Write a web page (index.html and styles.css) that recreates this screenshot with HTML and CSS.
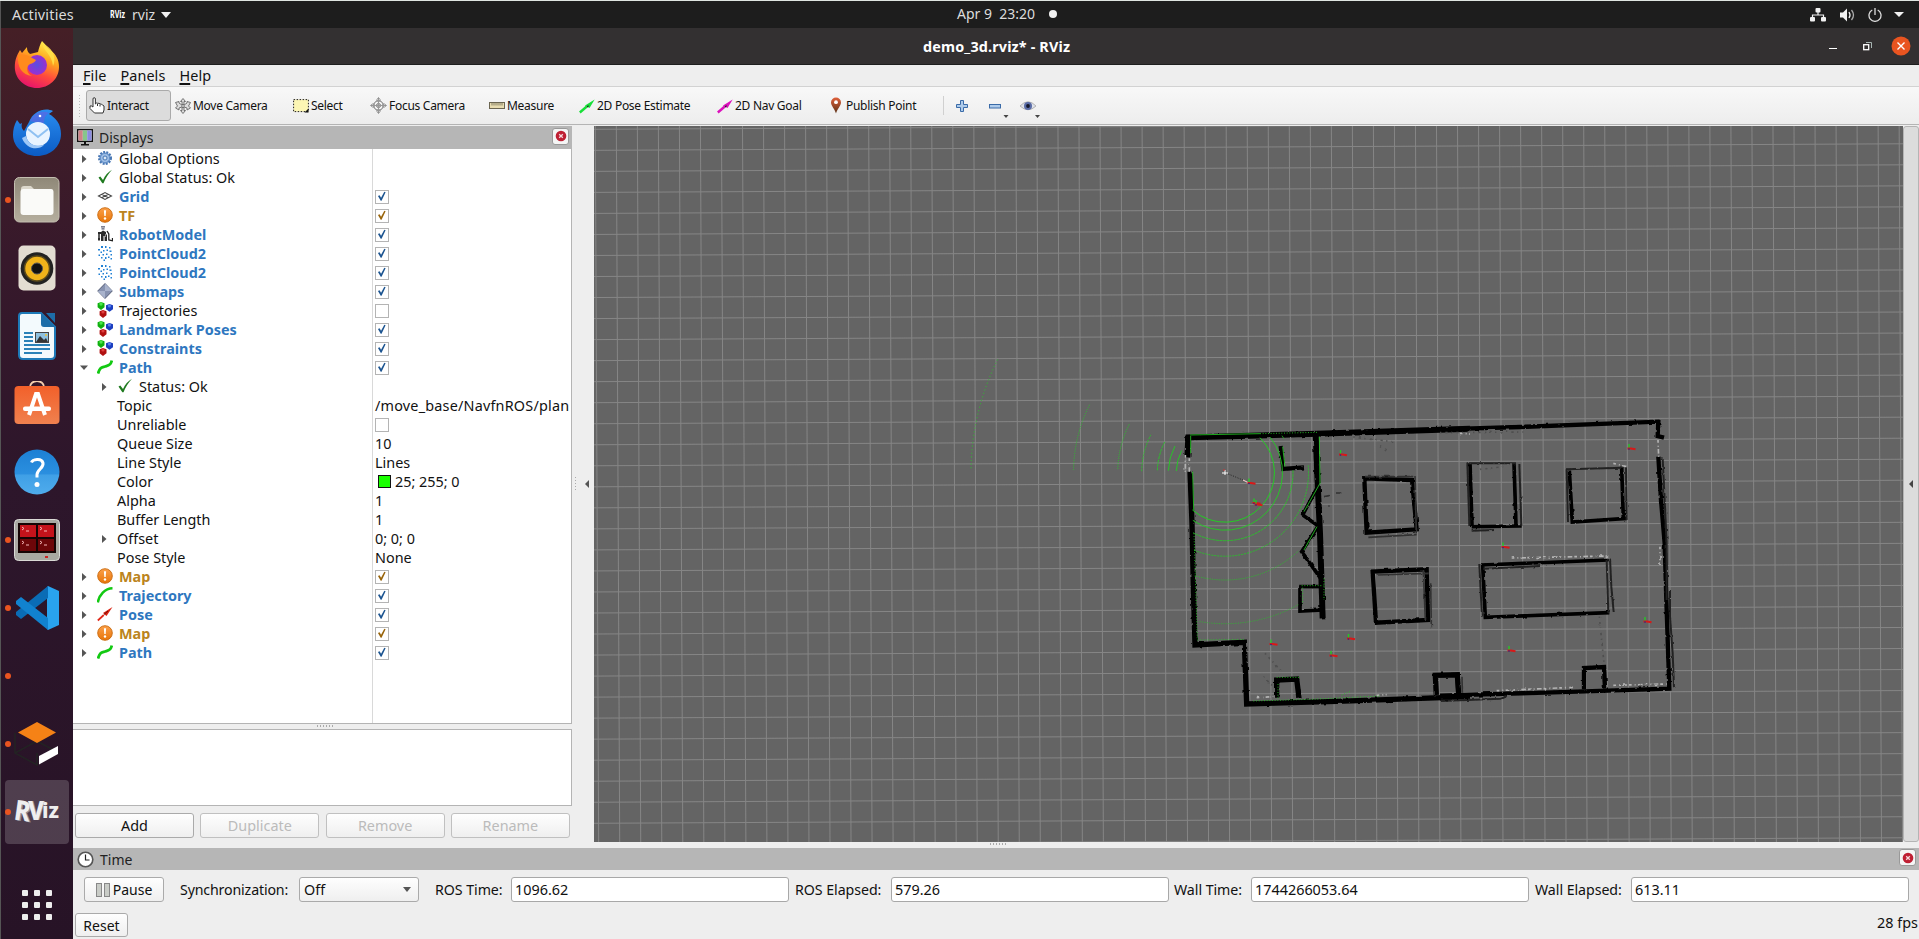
FILE: index.html
```html
<!DOCTYPE html>
<html lang="en">
<head>
<meta charset="utf-8">
<title>demo_3d.rviz* - RViz</title>
<link rel="stylesheet" href="styles.css">
</head>
<body>
<svg class="defs" aria-hidden="true">
  <defs>
    <linearGradient id="ffA" x1=".7" y1="0" x2=".3" y2="1"><stop offset="0" stop-color="#fff44f"/><stop offset=".35" stop-color="#ffa51f"/><stop offset=".65" stop-color="#ff4a3d"/><stop offset="1" stop-color="#e4106f"/></linearGradient>
    <radialGradient id="ffB"><stop offset="0" stop-color="#5b4de0"/><stop offset="1" stop-color="#9a2fd0"/></radialGradient>
    <linearGradient id="tbA" x1="0" y1="0" x2="0" y2="1"><stop offset="0" stop-color="#2a8df0"/><stop offset="1" stop-color="#0b5bc4"/></linearGradient>
    <linearGradient id="flA" x1="0" y1="0" x2="0" y2="1"><stop offset="0" stop-color="#8f8878"/><stop offset="1" stop-color="#b5ae9e"/></linearGradient>
    <linearGradient id="swA" x1="0" y1="0" x2="0" y2="1"><stop offset="0" stop-color="#f2602a"/><stop offset="1" stop-color="#f0814f"/></linearGradient>
    <linearGradient id="hpA" x1="0" y1="0" x2="0" y2="1"><stop offset="0" stop-color="#1d80d4"/><stop offset=".55" stop-color="#2b8fdf"/><stop offset=".56" stop-color="#3f9fe6"/><stop offset="1" stop-color="#4facec"/></linearGradient>
    <linearGradient id="orA" x1="0" y1="0" x2="0" y2="1"><stop offset="0" stop-color="#fba04a"/><stop offset="1" stop-color="#e87508"/></linearGradient>
    <linearGradient id="pinA" x1="0" y1="0" x2="0" y2="1"><stop offset="0" stop-color="#e0603a"/><stop offset="1" stop-color="#5a3218"/></linearGradient>
    <symbol id="arr" viewBox="0 0 8 10"><path d="M2 1l4.500 4L2 9z" fill="#555"/></symbol>
    <symbol id="down" viewBox="0 0 8 10"><path d="M0 2.500h8L4 7z" fill="#555"/></symbol>
    <symbol id="gear" viewBox="0 0 16 16"><circle cx="8" cy="8" r="5.800" fill="#8fb2dd" stroke="#4877b4" stroke-width="2.400" stroke-dasharray="1.900 1.200"/><circle cx="8" cy="8" r="4.600" fill="#9dbde4" stroke="#5d8ac4" stroke-width=".8"/><circle cx="8" cy="8" r="2" fill="#dbe8f6" stroke="#4877b4"/></symbol>
    <symbol id="ok" viewBox="0 0 16 16"><path d="M1.500 8.500l1.800-1L6 11C8 6.500 11 3 15 .8 11.500 4.500 8.500 9 6.500 14.200H5.300z" fill="#1f7a1f"/></symbol>
    <symbol id="grid" viewBox="0 0 16 16"><path d="M1.500 8L8 4.500 14.500 8 8 11.500zM4.700 6.200l6.600 3.600M11.300 6.200L4.700 9.800" fill="none" stroke="#444" stroke-width="1.100"/></symbol>
    <symbol id="warn" viewBox="0 0 16 16"><circle cx="8" cy="8" r="7.300" fill="url(#orA)" stroke="#c8690c" stroke-width=".9"/><path d="M6.900 3.200h2.200L8.700 9H7.300z" fill="#fff"/><circle cx="8" cy="11.500" r="1.200" fill="#fff"/></symbol>
    <symbol id="robot" viewBox="0 0 16 16"><path d="M4 .8h4M4.500 2.800h3" stroke="#555a70" stroke-width="1.300"/><path d="M1 6h3l2-1.500L9 6v2l1 1v6H7.600v-5H6.500v5H4V8H3v6.500H1z" fill="#2b2b2b"/><path d="M10 5l1.800 3v6l3.700.8V12" fill="none" stroke="#222" stroke-width="1.300"/><path d="M2 8v4M8.500 8v3" stroke="#bbb" stroke-width=".7"/></symbol>
    <symbol id="cloud" viewBox="0 0 16 16"><path d="M4 1h2v2H4zM8 1h1.500v2H8zM12 2h1.500v1.500H12zM1 4h2v1.500H1zM6 5h1.500v1.500H6zM9.500 4.500H11V6H9.500zM3.500 6.500H5V8H3.500zM12.500 5.500h2V7h-2zM1.500 9.500H3V11H1.500zM5.500 9H7v1.500H5.500zM9 8.500h1.500V10H9zM13.500 9H15v1.500h-1.500zM4 12h1.500v1.500H4zM8 12h1.500v2H8zM11 11.500h1.500V13H11zM6.500 14.500H8V16H6.500zM13.500 13H15v1.500h-1.500z" fill="#2080d4"/></symbol>
    <symbol id="dia" viewBox="0 0 16 16"><path d="M8 .5L15.300 8 8 15.500.7 8z" fill="#8792b0" stroke="#3d4660" stroke-width=".8"/><path d="M8 .5L15.300 8H8zM.7 8H8v7.500z" fill="#a9b3cc"/></symbol>
    <symbol id="marks" viewBox="0 0 16 16"><path d="M4 0l3.500 1.200v4L4 8 .6 5.200v-4z" fill="#10b010"/><circle cx="4" cy="2" r="1.700" fill="#4be84b"/><path d="M12.500 2L16 3.200v4l-3.500 2.600L9 7.200v-4z" fill="#1c3fc0"/><circle cx="12.400" cy="4" r="1.600" fill="#5a82f0"/><path d="M6 8l3.500 1.200v4L6 16l-3.400-2.800v-4z" fill="#b01010"/><circle cx="6" cy="10" r="1.600" fill="#e04040"/></symbol>
    <symbol id="path" viewBox="0 0 16 16"><path d="M1 14.500C3 8 5 8.500 8 7.500s6-1 6.800-6" fill="none" stroke="#12c912" stroke-width="2.800"/></symbol>
    <symbol id="traj" viewBox="0 0 16 16"><path d="M.8 15.500C2 8 8 1.500 15.500 1.300" fill="none" stroke="#12c912" stroke-width="2.500"/></symbol>
    <symbol id="pose" viewBox="0 0 16 16"><path d="M.8 14.500l6-5.500" stroke="#e02818" stroke-width="1.700"/><path d="M15.500 1L9.500 10 6 7z" fill="#d82010"/><path d="M7 8.500l4-3.500" stroke="#701008"/></symbol>
    <symbol id="arrow2d" viewBox="0 0 16 16"><path d="M.8 14.500l7-6" stroke="currentColor" stroke-width="2.400"/><path d="M15.700 1.500L10.500 10 6 7.500z" fill="currentColor"/><path d="M8 9.200l1.500-1.500" stroke="#222" stroke-width="1.200"/></symbol>
    <symbol id="tick" viewBox="0 0 14 14"><path d="M2.300 5.800l1.900-.7 1.700 2.900L9.700 1l1.500.4L6.500 11.400H5.500z" fill="currentColor"/></symbol>
    <symbol id="close" viewBox="0 0 12 12"><circle cx="6" cy="6" r="5.300" fill="#bf1f33"/><path d="M4.200 4.200l3.600 3.600M7.800 4.200L4.200 7.800" stroke="#f6d8dc" stroke-width="1.300"/></symbol>
  </defs>
</svg>

<div class="edge"></div>
<header class="topbar">
  <span class="activities">Activities</span>
  <span class="appmenu">
    <svg width="17" height="16" viewBox="0 0 17 16"><text x="0" y="11" class="tinylogo" textLength="15" lengthAdjust="spacingAndGlyphs">RViz</text></svg>
    <span class="appname">rviz</span>
    <svg class="caret" width="10" height="6"><path d="M0 0h10L5 6z" fill="#f2f2f2"/></svg>
  </span>
  <span class="clock"><span class="clocktext">Apr 9&nbsp; 23:20</span><i></i></span>
  <span class="tray">
    <svg width="16" height="14" viewBox="0 0 16 14" fill="#f2f2f2"><rect x="5.500" y="0" width="5" height="4.500" rx="1"/><rect x="0" y="9" width="5" height="4.500" rx="1"/><rect x="11" y="9" width="5" height="4.500" rx="1"/><path d="M8 4v3M2.500 10V7h11v3" fill="none" stroke="#f2f2f2" stroke-width="1.200"/></svg>
    <svg width="16" height="14" viewBox="0 0 16 14"><path d="M0 4.500h3L7 .5v13l-4-4H0z" fill="#f2f2f2"/><path d="M9 4q2 3 0 6" fill="none" stroke="#f2f2f2" stroke-width="1.300"/><path d="M11.500 2q4 5 0 10" fill="none" stroke="#aaa" stroke-width="1.300"/></svg>
    <svg width="14" height="14" viewBox="0 0 14 14" fill="none" stroke="#ddd" stroke-width="1.300"><path d="M4.300 2a6 6 0 1 0 5.400 0M7 0v7"/></svg>
    <svg width="10" height="5"><path d="M0 0h10L5 5z" fill="#f2f2f2"/></svg>
  </span>
</header>

<div class="desk">
  <nav class="dock">
    <div class="slot"><svg width="46" height="48" viewBox="0 0 46 48"><path d="M28 1c4 4 5 7 8 9 6 4 9 10 9 17 0 12-10 21-22 21S.800 39 .800 27C.800 20 3 15 6 10l2 3 5-6c0 4 1 5 3 7l8-2c1-4 2-8 4-11z" fill="url(#ffA)"/><circle cx="23" cy="25" r="10" fill="url(#ffB)"/><path d="M4 15c8-2 12 2 18 5-2 4-6 3-8 6-2 4 0 8 4 10C8 35 3 27 4 15z" fill="#ff8a1c"/><path d="M28 2c0 8 10 12 11 24 4-8-1-17-6-20z" fill="#ffe24a" opacity=".85"/></svg></div>
    <div class="slot"><svg width="48" height="48" viewBox="0 0 48 48"><path d="M16 14C20 3 32-1 40 3c-1 1-3 2-4 3 7 4 12 10 12 20 0 13-11 22-24 22S0 39 0 27c0-5 1-10 4-15l3 4 2-1c-1 4 0 6 2 8z" fill="url(#tbA)"/><path d="M17 13C21 5 29 2 36 5c-6 3-4 9-6 11z" fill="#6b5ce0" opacity=".55"/><circle cx="25" cy="26" r="12" fill="#e9f4ff"/><path d="M15 21l10 8 10-8" fill="none" stroke="#8fc1f2" stroke-width="2"/><path d="M13 28c2 8 8 11 18 9-6 6-18 4-22-7z" fill="#9ec8f7"/><circle cx="27" cy="8" r="1.300" fill="#fff"/></svg></div>
    <div class="slot run"><svg width="46" height="46" viewBox="0 0 46 46"><rect x=".5" y=".5" width="44.500" height="44.500" rx="5" fill="url(#flA)" stroke="#c4bfb1"/><path d="M7 12q0-3 3-3h7l3 3h17q2 0 2 2v20H7z" fill="#dcd8cc"/><rect x="6.500" y="12" width="33" height="26" rx="3" fill="#fafaf8"/></svg></div>
    <div class="slot"><svg width="38" height="46" viewBox="0 0 38 46"><rect x=".5" y=".5" width="37" height="45" rx="5" fill="#e3ddd2"/><circle cx="19" cy="23.500" r="16.300" fill="#222"/><circle cx="19" cy="23.500" r="12.500" fill="#f0b31a" stroke="#5b4a1b" stroke-width="1.500"/><circle cx="19" cy="23.500" r="5.500" fill="#111" stroke="#555"/></svg></div>
    <div class="slot"><svg width="38" height="48" viewBox="0 0 38 48"><path d="M4 1h19l14 14v28q0 4-4 4H5q-4 0-4-4V4q0-3 3-3z" fill="#f3fafd" stroke="#1d7ab8" stroke-width="2"/><path d="M28 1h9v10zM23 1v11q0 3 3 3h11z" fill="#1d6da8"/><path d="M6 21h9M6 25h9M6 29h9M6 33h26M6 37h26M6 41h18" stroke="#2b82b8" stroke-width="1.800"/><rect x="17.500" y="20.500" width="13" height="10" fill="#8ec0de" stroke="#444"/><path d="M18 30l4-6 4 4 2-2 2 4z" fill="#333"/><circle cx="28" cy="23" r="1" fill="#f6c22a"/></svg></div>
    <div class="slot"><svg width="46" height="46" viewBox="0 0 46 46"><path d="M16 8V6a7 6 0 0 1 14 0v2" fill="none" stroke="#f4cfae" stroke-width="1.800"/><rect x=".5" y="5" width="45" height="38" rx="4" fill="url(#swA)"/><path d="M15 34L22 13h2l7 21" fill="none" stroke="#fff" stroke-width="4"/><rect x="9" y="25.500" width="28" height="4.500" rx="2" fill="#fff"/></svg></div>
    <div class="slot"><svg width="46" height="46" viewBox="0 0 46 46"><circle cx="23" cy="23" r="22.500" fill="url(#hpA)"/><path d="M17.500 13.500c1-3 10-5 11.500.5 1 5-6 6.500-6 11.500v3" fill="none" stroke="#fff" stroke-width="3"/><circle cx="23" cy="35.500" r="2.500" fill="#fff"/></svg></div>
    <div class="slot run"><svg width="46" height="42" viewBox="0 0 46 42"><rect x=".5" y=".5" width="45" height="41" rx="4" fill="#a9a9a2" stroke="#dadad6"/><rect x="4" y="4" width="38" height="30" fill="#160404"/><path d="M6 6h16v12H6zM24 6h16v12H24z" fill="#c4131b"/><path d="M6 20h16v12H6zM24 20h16v12H24z" fill="#6d0609"/><path d="M8 8l2 1.500L8 11M12 12h3M26 8l2 1.500-2 1.500M30 12h3M8 22l2 1.500L8 25M12 26h3M26 22l2 1.500-2 1.500M30 26h3" fill="none" stroke="#f6b8b8"/><path d="M31 38h3" stroke="#c22" stroke-width="2"/></svg></div>
    <div class="slot run"><svg width="44" height="44" viewBox="0 0 44 44"><path d="M33 0l11 5v34l-11 5-1-1V1z" fill="#29a3ee"/><path d="M33 0v12L6 33 1 29v-3z" fill="#0a6cb5"/><path d="M1 15l5-4 27 21v12L1 18z" fill="#1182cf"/></svg></div>
    <div class="slot run"></div>
    <div class="slot run"><svg width="46" height="46" viewBox="0 0 46 46"><path d="M1 12v20l22 12V32M1 32l22-12 22 12" fill="none" stroke="#232323" stroke-width="1.500"/><path d="M4 11.500L23 1l19 10.500L23 22z" fill="#f58216"/><path d="M25 35l19-10v8L25 43.500z" fill="#fff"/></svg></div>
    <div class="slot run active"><svg width="50" height="56" viewBox="0 0 50 56" class="rvizlogo"><text x="4" y="37.500" font-size="28" fill="#8f8b93" transform="rotate(8 12 28)" textLength="16" lengthAdjust="spacingAndGlyphs">R</text><text x="2.500" y="37" font-size="28" transform="rotate(8 12 28)" textLength="16" lengthAdjust="spacingAndGlyphs">R</text><text x="17" y="36" font-size="26" textLength="16" fill="#8f8b93" lengthAdjust="spacingAndGlyphs">V</text><text x="16" y="35.500" font-size="26" textLength="16" lengthAdjust="spacingAndGlyphs">V</text><text x="30" y="34" font-size="22" textLength="17" lengthAdjust="spacingAndGlyphs">iz</text></svg></div>
    <div class="apps"><i></i><i></i><i></i><i></i><i></i><i></i><i></i><i></i><i></i></div>
  </nav>

  <main class="window">
    <div class="titlebar">
      <span class="title">demo_3d.rviz* - RViz</span>
      <span class="winbtns">
        <svg width="8" height="8"><path d="M0 6.500h8" stroke="#fff"/></svg>
        <svg width="9" height="9"><path d="M3 .5h5.500V6" fill="none" stroke="#a8b5b3"/><rect x=".7" y="2.700" width="5" height="5" fill="none" stroke="#fff" stroke-width="1.300"/></svg>
        <svg width="20" height="20"><circle cx="10" cy="10" r="9.500" fill="#e95420"/><path d="M6.500 6.500l7 7M13.500 6.500l-7 7" stroke="#fff" stroke-width="1.400"/></svg>
      </span>
    </div>
    <div class="menubar"><span><u>F</u>ile</span><span class="m2"><u>P</u>anels</span><span class="m3"><u>H</u>elp</span></div>
    <div class="toolbar">
      <span class="handle"></span>
      <span class="tool t1 on"><svg width="16" height="17" viewBox="0 0 16 17"><path d="M4 10V2q0-1.300 1.200-1.300T6.400 2v5l1.100-1 1.200.3 1.300 0 1 .6 1.300.3 1 .6L15 9v4l-1 3H5.500L1 11.500V9q1-.8 3 1z" fill="#fff" stroke="#333"/><path d="M8.500 7v2M11 7.500v2" stroke="#333"/></svg>Interact</span>
      <span class="tool t2"><svg width="16" height="16" viewBox="0 0 16 16"><path d="M8 .5l2.500 3H9v3h-2v-3H5.500zM8 15.500l2.500-3H9v-3h-2v3H5.500zM.5 4.500L4 3.500v1.500l3 2v2l-3 1v2L.5 10l2-2zM15.500 4.500L12 3.500v1.500L9 7v2l3 1v2l3.500-2-2-2z" fill="#ddd" stroke="#666" stroke-width=".9"/></svg>Move Camera</span>
      <span class="tool t3"><svg width="16" height="14"><rect x=".6" y=".6" width="14.800" height="12" fill="#fcf6b4" stroke="#222" stroke-dasharray="1.500 1.500"/><path d="M15.500 9.500v4h-4z" fill="#111"/></svg>Select</span>
      <span class="tool t4"><svg width="17" height="17" viewBox="0 0 17 17" fill="none" stroke="#777"><circle cx="8.500" cy="8.500" r="4.800"/><circle cx="8.500" cy="8.500" r="2"/><path d="M8.500 1v15M1 8.500h15" stroke="#999"/><path d="M7 5V2.500L8.500.5 10 2.500V5M7 12v2.500l1.500 2 1.500-2V12M5 7H2.500L.5 8.500l2 1.500H5M12 7h2.500l2 1.500-2 1.500H12" stroke="#888" stroke-width=".9"/></svg>Focus Camera</span>
      <span class="tool t5"><svg width="16" height="8"><rect x=".5" y=".5" width="15" height="6" fill="#e8dcb0" stroke="#6b6550"/><path d="M3 1v2.500M5 1v2.500M7 1v2.500M9 1v2.500M11 1v2.500M13 1v2.500" stroke="#6b6550" stroke-width=".8"/></svg>Measure</span>
      <span class="tool t6"><svg class="green" width="16" height="16"><use href="#arrow2d"/></svg>2D Pose Estimate</span>
      <span class="tool t7"><svg class="pink" width="16" height="16"><use href="#arrow2d"/></svg>2D Nav Goal</span>
      <span class="tool t8"><svg width="16" height="17" viewBox="0 0 16 17"><path d="M8 .5a5 5 0 0 1 5 5C13 9 9 12 8 16.500 7 12 3 9 3 5.500a5 5 0 0 1 5-5z" fill="url(#pinA)"/><circle cx="8" cy="5.200" r="1.900" fill="#fff"/></svg>Publish Point</span>
      <span class="sep"></span>
      <svg class="tadd" width="12" height="12"><path d="M4.500.5h3v4h4v3h-4v4h-3v-4h-4v-3h4z" fill="#aecbeb" stroke="#3a6ba8"/></svg>
      <svg class="tsub" width="20" height="24"><rect x=".5" y="10.500" width="11" height="3.500" fill="#aecbeb" stroke="#3a6ba8"/><path d="M14.500 21h5l-2.500 3z" fill="#444"/></svg>
      <svg class="teye" width="20" height="24"><path d="M0 12Q8 3.500 16 12 8 19.500 0 12z" fill="#dfe2ea" stroke="#b4b4b4"/><circle cx="8" cy="12" r="4" fill="#5a6ca6"/><circle cx="8" cy="12" r="1.900" fill="#15182a"/><path d="M15 21h5l-2.500 3z" fill="#444"/></svg>
    </div>

    <div class="work">
      <section class="displays">
        <div class="dockhead"><svg width="16" height="17" viewBox="0 0 16 17"><rect x=".7" y=".7" width="14.600" height="11.600" fill="#fff" stroke="#111" stroke-width="1.400"/><path d="M1.500 1.500h4.300v10H1.500z" fill="#cf8288"/><path d="M5.800 1.500h4.400v10H5.800z" fill="#86c78b"/><path d="M10.200 1.500h4.300v10h-4.300z" fill="#8b8be0"/><path d="M7 12h2v3h3v1.500H4V15h3z" fill="#111"/></svg><span>Displays</span><button class="x"><svg width="12" height="12"><use href="#close"/></svg></button></div>
        <div class="tree">
          <div class="row"><svg class="a"><use href="#arr"/></svg><svg class="i"><use href="#gear"/></svg><span class="n">Global Options</span></div>
          <div class="row"><svg class="a"><use href="#arr"/></svg><svg class="i"><use href="#ok"/></svg><span class="n">Global Status: Ok</span></div>
          <div class="row"><svg class="a"><use href="#arr"/></svg><svg class="i"><use href="#grid"/></svg><span class="n b">Grid</span><svg class="c"><use href="#tick"/></svg></div>
          <div class="row"><svg class="a"><use href="#arr"/></svg><svg class="i"><use href="#warn"/></svg><span class="n w">TF</span><svg class="c cw"><use href="#tick"/></svg></div>
          <div class="row"><svg class="a"><use href="#arr"/></svg><svg class="i"><use href="#robot"/></svg><span class="n b">RobotModel</span><svg class="c"><use href="#tick"/></svg></div>
          <div class="row"><svg class="a"><use href="#arr"/></svg><svg class="i"><use href="#cloud"/></svg><span class="n b">PointCloud2</span><svg class="c"><use href="#tick"/></svg></div>
          <div class="row"><svg class="a"><use href="#arr"/></svg><svg class="i"><use href="#cloud"/></svg><span class="n b">PointCloud2</span><svg class="c"><use href="#tick"/></svg></div>
          <div class="row"><svg class="a"><use href="#arr"/></svg><svg class="i"><use href="#dia"/></svg><span class="n b">Submaps</span><svg class="c"><use href="#tick"/></svg></div>
          <div class="row"><svg class="a"><use href="#arr"/></svg><svg class="i"><use href="#marks"/></svg><span class="n">Trajectories</span><svg class="c"></svg></div>
          <div class="row"><svg class="a"><use href="#arr"/></svg><svg class="i"><use href="#marks"/></svg><span class="n b">Landmark Poses</span><svg class="c"><use href="#tick"/></svg></div>
          <div class="row"><svg class="a"><use href="#arr"/></svg><svg class="i"><use href="#marks"/></svg><span class="n b">Constraints</span><svg class="c"><use href="#tick"/></svg></div>
          <div class="row"><svg class="a"><use href="#down"/></svg><svg class="i"><use href="#path"/></svg><span class="n b">Path</span><svg class="c"><use href="#tick"/></svg></div>
          <div class="row sub"><svg class="a"><use href="#arr"/></svg><svg class="i"><use href="#ok"/></svg><span class="n">Status: Ok</span></div>
          <div class="row prop"><span class="n">Topic</span><span class="v long">/move_base/NavfnROS/plan</span></div>
          <div class="row prop"><span class="n">Unreliable</span><svg class="c"></svg></div>
          <div class="row prop"><span class="n">Queue Size</span><span class="v">10</span></div>
          <div class="row prop"><span class="n">Line Style</span><span class="v">Lines</span></div>
          <div class="row prop"><span class="n">Color</span><i class="sw"></i><span class="v">25; 255; 0</span></div>
          <div class="row prop"><span class="n">Alpha</span><span class="v">1</span></div>
          <div class="row prop"><span class="n">Buffer Length</span><span class="v">1</span></div>
          <div class="row prop"><svg class="a"><use href="#arr"/></svg><span class="n">Offset</span><span class="v">0; 0; 0</span></div>
          <div class="row prop"><span class="n">Pose Style</span><span class="v">None</span></div>
          <div class="row"><svg class="a"><use href="#arr"/></svg><svg class="i"><use href="#warn"/></svg><span class="n w">Map</span><svg class="c cw"><use href="#tick"/></svg></div>
          <div class="row"><svg class="a"><use href="#arr"/></svg><svg class="i"><use href="#traj"/></svg><span class="n b">Trajectory</span><svg class="c"><use href="#tick"/></svg></div>
          <div class="row"><svg class="a"><use href="#arr"/></svg><svg class="i"><use href="#pose"/></svg><span class="n b">Pose</span><svg class="c"><use href="#tick"/></svg></div>
          <div class="row"><svg class="a"><use href="#arr"/></svg><svg class="i"><use href="#warn"/></svg><span class="n w">Map</span><svg class="c cw"><use href="#tick"/></svg></div>
          <div class="row"><svg class="a"><use href="#arr"/></svg><svg class="i"><use href="#path"/></svg><span class="n b">Path</span><svg class="c"><use href="#tick"/></svg></div>
        </div>
        <div class="hsplit"></div>
        <div class="desc"></div>
        <div class="btnrow"><button>Add</button><button disabled>Duplicate</button><button disabled>Remove</button><button disabled>Rename</button></div>
      </section>
      <div class="vsplit"><i class="vdots"></i><svg width="4" height="8"><path d="M4 0v8L0 4z" fill="#555"/></svg></div>
      <svg class="view" width="1309" height="716" viewBox="594 126 1309 716">
        <defs>
          <filter id="rough" x="-5%" y="-5%" width="110%" height="110%"><feTurbulence type="fractalNoise" baseFrequency=".18" numOctaves="2" seed="4" result="n"/><feDisplacementMap in="SourceGraphic" in2="n" scale="2.600" xChannelSelector="R" yChannelSelector="G"/><feGaussianBlur stdDeviation=".6"/></filter>
          <g id="axes"><path d="M0 0V-4.500" stroke="#1fd01f" stroke-width="1.300"/><path d="M-1.500 0H2l4.500 .8" fill="none" stroke="#d81818" stroke-width="2"/><circle r=".8" cy=".6" fill="#203090"/></g>
        </defs>
        <g id="gridlines"></g>
        <g class="walls" filter="url(#rough)">
          <g transform="translate(1150 400) scale(.33333)">
            <path class="w16" d="M112 172L115 112 300 107 500 101 730 94 960 86"/>
            <path class="w14" d="M120 215L126 370 130 560 135 735 283 727 290 912 560 904 960 890"/>
            <path class="w16" d="M497 100L503 250 510 400 518 655"/>
            <path class="w12" d="M392 138L400 207 462 202"/>
            <path class="w10" d="M504 258L458 345 505 378M503 380L455 455 512 535M520 560H450V633L520 630"/>
            <path class="w14" d="M380 893V840L440 837 447 893M859 885L856 826 922 824 926 882"/>
            <path class="w12" d="M643 235L650 398 800 388 786 240Z"/>
            <path class="w4" d="M655 412L800 404M795 228L799 400M645 230L790 230M522 290l16-3M558 279h16M535 318h4"/>
            <path class="w12" d="M668 515L678 668 834 660 830 508Z"/>
            <path class="w4" d="M680 525L836 520M820 510L826 660M842 550L844 682M936 830L937 878"/>
          </g>
          <g transform="translate(1440 400) scale(.33333)">
            <path class="w12" d="M0 88L240 81 655 65 653 108 672 113"/>
            <path class="w12" d="M655 170L663 300 674 430 679 600 688 866 340 877 0 887"/>
            <path class="w6" d="M668 175L680 430 680 600M690 570L690 650 698 760 702 862M0 903L180 896 200 888"/>
            <path class="w10" d="M90 190L96 378M95 380L245 378M222 190L228 375"/>
            <path class="w6" d="M80 190L228 190M238 192L244 378M95 392L165 390M82 190L88 375"/>
            <path class="w10" d="M388 212L397 366 560 355M545 200L550 355"/>
            <path class="w6" d="M378 208L550 203M558 198L560 360M380 208L384 366"/>
            <path class="w10" d="M125 495L505 480M128 495L136 652 508 638"/>
            <path class="w6" d="M500 480L505 640M510 476L514 560 521 636M118 495L126 650M130 506L300 498"/>
            <path class="w12" d="M432 868V804L492 801 495 866M0 826L52 825 55 880"/>
          </g>
        </g>
        <g class="haze" filter="url(#rough)">
          <g transform="translate(1440 400) scale(.33333)"><path class="pale" d="M170 872L400 862M520 856L680 852M215 474L505 468M660 440V500M654 120L656 170M520 190L560 200M60 100L90 102"/><path class="dim" d="M478 650L492 790M120 208L190 200M0 98L250 96"/></g>
          <g transform="translate(1150 400) scale(.33333)"><path class="pale" d="M320 893L370 890M680 886L710 884M118 175V215M106 165V215"/><path class="dim" d="M345 760L400 820M340 830L370 860M610 112L730 125M690 140L710 150"/></g>
        </g>
        <g class="scan" transform="translate(1225 472.7)" id="scan"></g>
        <g class="scanwalls" transform="translate(1150 400) scale(.33333)">
          <path d="M330 101L505 97M132 400L142 720 285 718M522 535V600M455 557H520M458 563V612M380 832H450M384 895V850M310 903L480 898 690 888M575 885L600 875" class="dash"/>
          <path d="M120 105L330 101M122 108V160M128 215L131 330M508 110L510 250 462 335M501 380L462 450M398 140L405 200"/>
        </g>
        <path d="M1226 473l24 10" stroke="#222" stroke-dasharray="1 1.500"/>
        <path d="M1222 473h6M1225 470v5" stroke="#fff" stroke-width="1"/><path d="M1224 471v-2" stroke="#c33"/><path d="M1243 480l5 2.500" stroke="#f0c8c8" stroke-width="1.200"/>
        <use href="#axes" x="1340.500" y="454.500"/><use href="#axes" x="1249" y="483"/><use href="#axes" x="1254" y="503"/><use href="#axes" x="1256" y="504.500"/><use href="#axes" x="1348.500" y="638.500"/><use href="#axes" x="1331" y="655.500"/><use href="#axes" x="1271" y="644"/><use href="#axes" x="1629" y="448.500"/><use href="#axes" x="1503" y="547"/><use href="#axes" x="1645" y="621.500"/><use href="#axes" x="1509" y="650.500"/>
      </svg>
      <div class="rsplit"><svg width="4" height="8"><path d="M4 0v8L0 4z" fill="#444"/></svg></div>
    </div>
    <div class="bsplit"></div>

    <section class="time">
      <div class="dockhead"><svg width="17" height="17" viewBox="0 0 17 17"><circle cx="8.500" cy="8.500" r="7.300" fill="#fff" stroke="#555" stroke-width="1.600"/><path d="M8.500 3.500v5.500h4" fill="none" stroke="#222" stroke-width="1.200"/></svg><span>Time</span><button class="x"><svg width="12" height="12"><use href="#close"/></svg></button></div>
      <div class="fields">
        <button class="pause"><svg width="14" height="14"><rect x=".5" y=".5" width="5" height="13" fill="#c9ccc7" stroke="#888"/><rect x="8.500" y=".5" width="5" height="13" fill="#c9ccc7" stroke="#888"/></svg>Pause</button>
        <label class="l1">Synchronization:</label><div class="combo"><span>Off</span><svg width="8" height="5"><path d="M0 0h8L4 5z" fill="#555"/></svg></div>
        <label class="l2">ROS Time:</label><div class="field">1096.62</div>
        <label class="l3">ROS Elapsed:</label><div class="field">579.26</div>
        <label class="l4">Wall Time:</label><div class="field">1744266053.64</div>
        <label class="l5">Wall Elapsed:</label><div class="field">613.11</div>
      </div>
      <div class="foot"><button class="reset">Reset</button><span>28 fps</span></div>
    </section>
  </main>
</div>
<script src="script.js"></script>
</body>
</html>
```
FILE: styles.css
```css
* { box-sizing: border-box; }
body { margin: 0; width: 1919px; height: 939px; overflow: hidden; background: #eee; font: 14.4px/19px "Noto Sans", sans-serif; letter-spacing: 0; color: #111; display: flex; flex-direction: column; }
button { font: inherit; letter-spacing: inherit; color: inherit; padding: 0; display: flex; align-items: center; justify-content: center; border: 1px solid #aaa; border-radius: 3px; background: linear-gradient(#fefefe, #efefef); }
button:disabled { color: #bbb; border-color: #c0c0c0; }
svg { flex: none; display: block; }
.defs { position: absolute; width: 0; height: 0; }
.edge { height: 1px; flex: none; background: #dfe5e1; }

.topbar { height: 27px; flex: none; background: #1d1d1d; color: #dcdcdc; display: grid; grid-template-columns: 109px 1fr auto; align-items: center; border-left: 1px solid #555; position: relative; }
.activities { padding-left: 11px; letter-spacing: .2px; }
.appmenu { display: flex; align-items: center; font-size: 14px; }
.appname { width: 28px; margin-left: 5px; }
.caret { margin-left: 1px; }
.tinylogo { font: bold 10px "Noto Sans", sans-serif; fill: #fff; }
.clock { position: absolute; left: 956px; top: 3px; display: flex; align-items: center; white-space: nowrap; font-size: 14px; }
.clocktext { width: 79px; }
.clock i { width: 8px; height: 8px; border-radius: 50%; background: #f2f2f2; margin-left: 13px; }
.tray { display: flex; align-items: center; padding-right: 15px; }
.tray svg:nth-child(2) { margin-left: 14px; }
.tray svg:nth-child(3) { margin-left: 12px; }
.tray svg:nth-child(4) { margin-left: 12px; }

.desk { flex: 1; display: flex; min-height: 0; }
.dock { width: 73px; flex: none; border-left: 1px solid #555; background: linear-gradient(#451f26, #37192b 25%, #2d162b 50%, #271326); padding-top: 2px; }
.slot { height: 68px; display: flex; align-items: center; justify-content: center; position: relative; }
.slot.run::before { content: ""; position: absolute; left: 4px; top: 31px; width: 6px; height: 6px; border-radius: 50%; background: #e95420; }
.slot.active::after { content: ""; position: absolute; left: 4px; top: 2px; width: 64px; height: 64px; border-radius: 4px; background: rgba(255,255,255,.18); }
.slot svg { z-index: 1; }
.slot.active::before { z-index: 1; }
.rvizlogo { font-family: "Noto Sans", sans-serif; font-weight: 800; fill: #eee; overflow: visible; }
.apps { display: grid; grid-template-columns: repeat(3, 6px); gap: 6px; justify-content: center; padding-top: 44px; }
.apps i { height: 6px; background: #eee; border-radius: 1px; }

.window { flex: 1; min-width: 0; display: flex; flex-direction: column; }
.titlebar { height: 37px; flex: none; background: #333031; border-bottom: 1px solid #1e1e1e; color: #fff; font-weight: bold; display: grid; grid-template-columns: 1fr auto; align-items: center; padding-left: 850px; }
.title { letter-spacing: .15px; }
.winbtns { display: flex; align-items: center; padding-right: 8px; }
.winbtns svg:nth-child(2) { margin-left: 26px; }
.winbtns svg:nth-child(3) { margin-left: 19px; }
.menubar { height: 22px; flex: none; border-bottom: 1px solid #d2d2d2; display: flex; align-items: center; padding-left: 10px; letter-spacing: .1px; }
.menubar u { text-underline-offset: 2px; text-decoration-thickness: 1.500px; }
.m2 { margin-left: 14px; }
.m3 { margin-left: 14px; }
.toolbar { height: 38px; flex: none; background: linear-gradient(#f8f8f8, #ededed); border-bottom: 1px solid #b4b4b4; display: flex; align-items: center; padding-left: 5px; font-size: 12px; letter-spacing: -.28px; }
.handle { width: 4px; height: 24px; margin-right: 4px; background: radial-gradient(circle, #bbb 0 .8px, transparent 1px) 0 0/3px 3px; }
.tool { height: 31px; display: flex; align-items: center; gap: 2px; padding-left: 3px; white-space: nowrap; flex: none; }
.tool.on { border: 1px solid #aaa; border-radius: 3px; background: #dcdcdc; padding-left: 2px; margin-right: 1px; }
.t1 { width: 85px; } .t2 { width: 118px; } .t3 { width: 77px; } .t4 { width: 119px; } .t5 { width: 90px; } .t6 { width: 138px; } .t7 { width: 111px; } .t8 { width: 118px; }
.green { color: #18e038; } .pink { color: #dc10bc; }
.sep { width: 1px; height: 19px; background: #d0d0d0; }
.tadd { margin-left: 12px; } .tsub { margin-left: 21px; } .teye { margin-left: 11px; }

.work { height: 717px; padding-top: 1px; flex: none; display: flex; }
.displays { width: 499px; flex: none; display: flex; flex-direction: column; }
.dockhead { height: 23px; flex: none; background: #b6b6b6; display: flex; align-items: center; padding-left: 4px; gap: 6px; color: #222; font-size: 14px; }
.x { width: 17px; height: 17px; margin-left: auto; border-color: #999; background: #f5f5f5; margin-right: 3px; margin-bottom: 3px; }
.tree { height: 575px; flex: none; background: linear-gradient(#d9d9d9,#d9d9d9) 299px 0/1px 100% no-repeat #fff; border-right: 1px solid #b4b4b4; border-bottom: 1px solid #b4b4b4; }
.row { height: 19px; display: grid; grid-template-columns: [a] 24px [i] 22px [n] 254px [v] 1fr; align-items: center; white-space: nowrap; }
.row > * { grid-row: 1; }
.a { grid-column: a; width: 8px; height: 10px; margin-left: 7px; }
.i { grid-column: i; width: 16px; height: 16px; margin-bottom: 2px; }
.n { grid-column: n; }
.v { grid-column: v; padding-left: 2px; }
.long { letter-spacing: .2px; }
.b { color: #2e77bf; font-weight: bold; }
.w { color: #bb8420; font-weight: bold; }
.c { grid-column: v; margin-left: 2px; width: 14px; height: 14px; border: 1px solid #b4b4b4; background: #fff; color: #1d5591; }
.cw { color: #99650c; }
.sub { grid-template-columns: [a] 44px [i] 22px [n] 234px [v] 1fr; }
.sub .a, .prop .a { margin-left: 27px; }
.prop { grid-template-columns: [a] 44px [n] 256px [v] 1fr; }
.sw { grid-column: v; width: 13px; height: 13px; margin-left: 5px; background: #19ff00; border: 1px solid #111; }
.sw + .v { padding-left: 22px; }
.hsplit { height: 5px; flex: none; background: radial-gradient(circle, #aaa 0 .8px, transparent 1px) 0 0/3px 4px no-repeat; background-repeat: repeat-x; margin: 0 239px 0 243px; }
.desc { height: 77px; flex: none; background: #fff; border: 1px solid #b4b4b4; border-left: 0; }
.btnrow { display: grid; grid-template-columns: repeat(4, 119px); gap: 6.300px; padding: 7px 0 0 2px; }
.btnrow button { height: 25px; }
.vsplit { width: 22px; flex: none; display: flex; align-items: center; padding-left: 2px; }
.vdots { width: 3px; height: 16px; margin-right: 8px; background: radial-gradient(circle, #aaa 0 .8px, transparent 1px) 0 0/3px 3px; }
.view { background: #646464; }
.walls path { fill: none; stroke: #060606; }
.w16 { stroke-width: 18; } .w14 { stroke-width: 16; } .w12 { stroke-width: 13; } .w10 { stroke-width: 11; }
.walls .w6 { stroke-width: 6; stroke: #222; } .walls .w4 { stroke-width: 5; stroke: #333; }
.haze path { fill: none; stroke-width: 5; }
.haze .pale { stroke: #b4b4b4; stroke-dasharray: 8 9 3 7 14 6; }
.haze .dim { stroke: #505050; stroke-dasharray: 4 12 7 10; }
.scan path, .scanwalls path { fill: none; stroke: #24cc24; stroke-width: 1; }
.scanwalls path { stroke-width: 2.500; }
.scanwalls .dash { stroke-dasharray: 3 5; }
.rsplit { width: 16px; flex: none; background: #dcdcdc; border: 1px solid #b4b4b4; border-radius: 3px; display: flex; align-items: center; justify-content: center; }
.bsplit { height: 6px; flex: none; margin-left: 916px; width: 17px; background: radial-gradient(circle, #aaa 0 .8px, transparent 1px) 0 0/3px 4px repeat-x; }

.time .dockhead { height: 22px; }
.fields { display: flex; padding-top: 7px; height: 32px; align-items: center; white-space: nowrap; }
.pause { width: 80px; height: 25px; margin-left: 11px; gap: 3px; font-size: 14px; flex: none; }
.combo { flex: none; width: 120px; height: 25px; border: 1px solid #aaa; border-radius: 3px; background: linear-gradient(#fefefe, #efefef); display: flex; align-items: center; justify-content: space-between; padding: 0 7px 0 4px; }
.field { flex: none; width: 278px; height: 25px; background: #fff; border: 1px solid #a8a8a8; border-radius: 3px; padding: 2px 3px; }
label { flex: none; font-size: 14.2px; letter-spacing: -.05px; }
.l1 { margin-left: 16px; width: 119px; letter-spacing: -.15px; } .l2 { margin-left: 16px; width: 76px; } .l3 { margin-left: 6px; width: 96px; } .l4 { margin-left: 5px; width: 77px; } .l5 { margin-left: 6px; width: 96px; }
.foot { display: flex; justify-content: space-between; padding: 11px 1px 0 2px; }
.reset { width: 53px; height: 24px; font-size: 14px; }
```
FILE: script.js
```js
const NS = 'http://www.w3.org/2000/svg';
const add = (parent, tag, attrs) => {
  const el = document.createElementNS(NS, tag);
  for (const k in attrs) el.setAttribute(k, attrs[k]);
  parent.appendChild(el);
};

// Ground plane grid, slightly rotated
const grid = document.getElementById('gridlines');
const pitch = 21.03, tilt = 0.0047;
let d = '';
for (let k = 0; k < 64; k++) {
  const x = 595.3 + k * pitch;
  d += `M${x} 126L${x + 716 * tilt} 842`;
}
for (let k = -1; k < 36; k++) {
  const y = 129.3 + k * pitch;
  d += `M594 ${y}L1903 ${y - 1309 * 0.005}`;
}
add(grid, 'path', { d, stroke: '#8c8c8c', 'stroke-width': 1, opacity: 0.85 });

// Lidar rings: radius, start and end angle in degrees, dash, opacity
const rings = [
  [49.5, -45, 131, '', 1], [57.5, -38, 124, '', 0.9], [68, -2, 118, '3 .6', 0.85],
  [83.5, -5, 112, '2 1', 0.85], [107.3, 47, 107, '1 1.2', 0.85], [151, 61, 100, '1 1.4', 0.8],
  [48.7, 182, 207, '', 0.9], [56.7, 182, 208, '', 0.9], [67.7, 182, 207, '3 .8', 0.85],
  [83.3, 181, 207, '2 1', 0.85], [107.3, 182, 207, '1 1', 0.85], [151.5, 181, 207, '1 1.3', 0.85],
  [254, 181, 207, '1.2 2.4', 0.8], [68, -33, -30, '', 0.7]
];
const scan = document.getElementById('scan');
for (const [r, a, b, dash, opacity] of rings) {
  const p = t => `${r * Math.cos(t * Math.PI / 180)} ${r * Math.sin(t * Math.PI / 180)}`;
  add(scan, 'path', { d: `M${p(a)}A${r} ${r} 0 0 1 ${p(b)}`, 'stroke-dasharray': dash || 'none', opacity });
}
```
